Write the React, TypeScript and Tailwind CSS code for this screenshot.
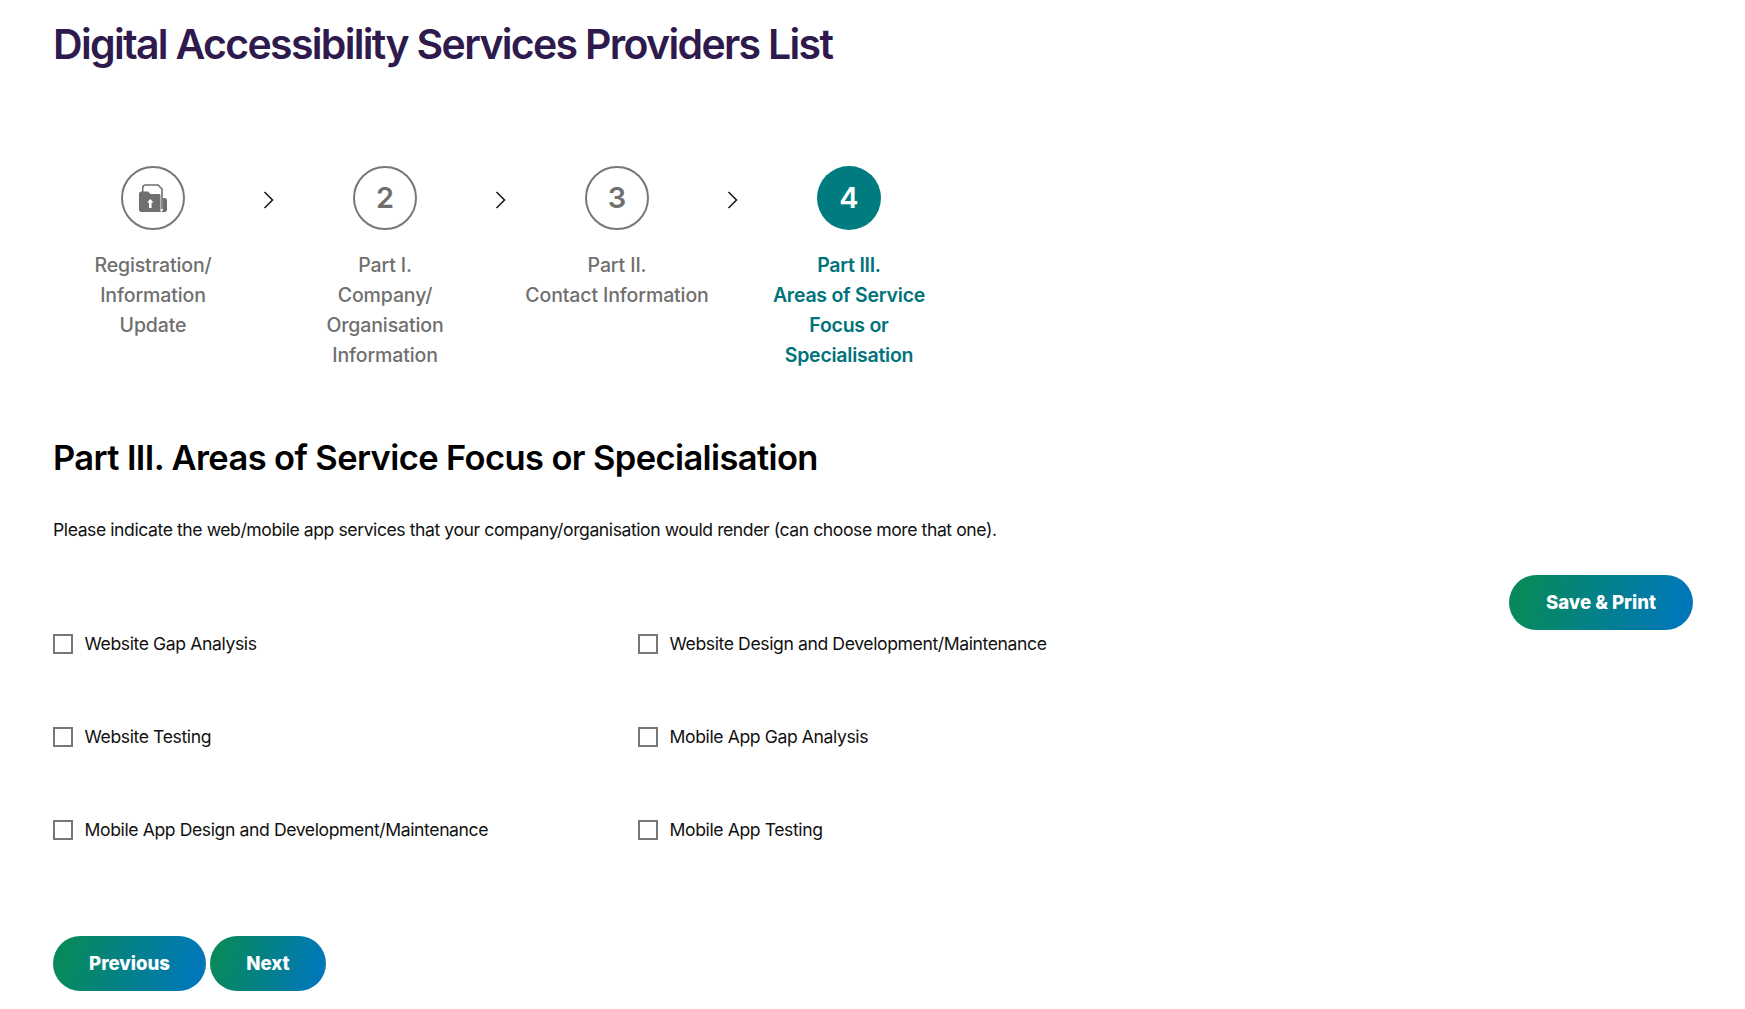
const font = "font-['Inter','Liberation_Sans',sans-serif]";

function Chevron() {
  return (
    <div className="w-[46px] shrink-0 flex justify-center pt-[24px] pr-[1px]">
      <svg width="11" height="20" viewBox="0 0 11 20" fill="none" stroke="#111" strokeWidth="1.5">
        <path d="M1.5 2l8 8-8 8" />
      </svg>
    </div>
  );
}

function FolderIcon() {
  return (
    <svg width="28" height="28" viewBox="0 0 28 28">
      <path d="M3.7 8V4a3 3 0 0 1 3-3H19l4 4v20" fill="none" stroke="#6f6f6f" strokeWidth="1.6" />
      <path d="M0 10a2.5 2.5 0 0 1 2.5-2.5H9l2.5 2.5H20a1.5 1.5 0 0 1 1.5 1.5V28H2.5A2.5 2.5 0 0 1 0 25.5Z" fill="#6f6f6f" />
      <path d="M24 14h1.5a2.5 2.5 0 0 1 2.5 2.5v9a2.5 2.5 0 0 1-2.5 2.5H21.6l1-0.5c.9-.6 1.4-1.5 1.4-2.5Z" fill="#6f6f6f" />
      <path d="M11.3 15l3.3 3.6h-2v5.4h-2.6v-5.4H8Z" fill="#fff" />
    </svg>
  );
}

function Step({ active, icon, lines }: { active?: boolean; icon: React.ReactNode; lines: string[] }) {
  return (
    <div className="w-[186px] shrink-0 flex flex-col items-center text-center">
      <div
        className={
          active
            ? "w-[64px] h-[64px] rounded-full bg-[#007c80] text-white flex items-center justify-center text-[29px] font-semibold"
            : "w-[64px] h-[64px] rounded-full border-2 border-[#777777] text-[#6f6f6f] flex items-center justify-center text-[29px] font-semibold"
        }
      >
        {icon}
      </div>
      <p
        className={
          active
            ? "mt-[20px] text-[19.5px] leading-[30px] font-semibold text-[#00737a] tracking-[-0.25px]"
            : "mt-[20px] text-[19.5px] leading-[30px] font-[550] text-[#6f6f6f] tracking-[-0.12px]"
        }
      >
        {lines.map((l) => (
          <span key={l} className="block whitespace-nowrap">
            {l}
          </span>
        ))}
      </p>
    </div>
  );
}

function Check({ label }: { label: string }) {
  return (
    <label className="h-[20px] flex items-center gap-[11.5px] text-[17.6px] leading-[19px] pb-[1px] text-[#111111] tracking-[-0.4px]">
      <span className="w-[20px] h-[20px] border-2 border-[#777777] bg-white shrink-0" />
      {label}
    </label>
  );
}

function Btn({ children, className }: { children: React.ReactNode; className: string }) {
  return (
    <button
      className={
        "h-[55px] rounded-full bg-[linear-gradient(105deg,#08895c_10%,#0078b8_90%)] text-white font-extrabold text-[18.6px] " +
        className
      }
    >
      {children}
    </button>
  );
}

export default function App() {
  return (
    <div className={font + " bg-white w-full h-[1009px] overflow-hidden pl-[53px] pr-[52px] pt-[15px]"}>
      <h1 className="text-[41px] leading-[58px] font-semibold text-[#2e1a4d] tracking-[-1.68px]">
        Digital Accessibility Services Providers List
      </h1>
      <div className="flex mt-[93px] ml-[7px]">
        <Step icon={<FolderIcon />} lines={["Registration/", "Information", "Update"]} />
        <Chevron />
        <Step icon="2" lines={["Part I.", "Company/", "Organisation", "Information"]} />
        <Chevron />
        <Step icon="3" lines={["Part II.", "Contact Information"]} />
        <Chevron />
        <Step active icon="4" lines={["Part III.", "Areas of Service", "Focus or", "Specialisation"]} />
      </div>
      <h2 className="mt-[64px] text-[34.5px] leading-[48px] font-semibold text-black tracking-[-0.61px]">
        Part III. Areas of Service Focus or Specialisation
      </h2>
      <p className="mt-[34px] text-[17.6px] leading-[28px] text-[#111111] tracking-[-0.43px]">
        Please indicate the web/mobile app services that your company/organisation would render (can choose more that one).
      </p>
      <div className="flex items-start mt-[31px]">
        <div className="flex-1 pt-[59px] grid grid-cols-[585px_1fr] gap-y-[73px]">
          <Check label="Website Gap Analysis" />
          <Check label="Website Design and Development/Maintenance" />
          <Check label="Website Testing" />
          <Check label="Mobile App Gap Analysis" />
          <Check label="Mobile App Design and Development/Maintenance" />
          <Check label="Mobile App Testing" />
        </div>
        <Btn className="w-[184px]">Save &amp; Print</Btn>
      </div>
      <div className="flex gap-[4px] mt-[96px]">
        <Btn className="w-[153px]">Previous</Btn>
        <Btn className="w-[116px]">Next</Btn>
      </div>
    </div>
  );
}
